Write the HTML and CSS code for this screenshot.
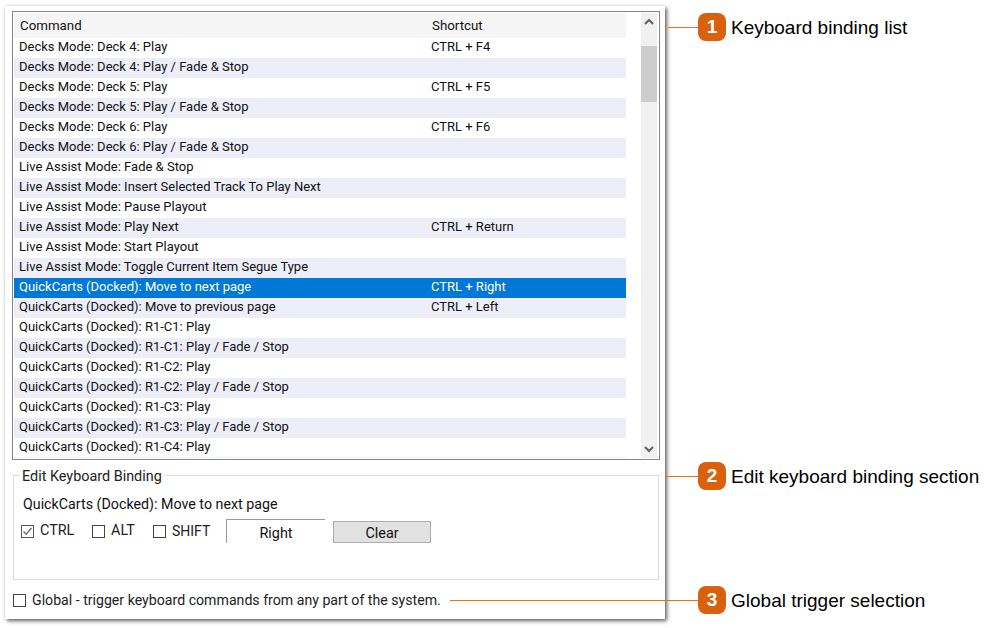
FILE: index.html
```html
<!DOCTYPE html>
<html lang="en">
<head>
<meta charset="utf-8">
<title>Keyboard bindings</title>
<link rel="stylesheet" href="styles.css">
</head>
<body>
<main class="panel">
  <section class="list">
    <div class="table">
      <div class="row head"><span class="cmd">Command</span><span>Shortcut</span></div>
      <div class="row"><span class="cmd">Decks Mode: Deck 4: Play</span><span>CTRL + F4</span></div>
      <div class="row alt"><span class="cmd">Decks Mode: Deck 4: Play / Fade &amp; Stop</span><span></span></div>
      <div class="row"><span class="cmd">Decks Mode: Deck 5: Play</span><span>CTRL + F5</span></div>
      <div class="row alt"><span class="cmd">Decks Mode: Deck 5: Play / Fade &amp; Stop</span><span></span></div>
      <div class="row"><span class="cmd">Decks Mode: Deck 6: Play</span><span>CTRL + F6</span></div>
      <div class="row alt"><span class="cmd">Decks Mode: Deck 6: Play / Fade &amp; Stop</span><span></span></div>
      <div class="row"><span class="cmd">Live Assist Mode: Fade &amp; Stop</span><span></span></div>
      <div class="row alt"><span class="cmd">Live Assist Mode: Insert Selected Track To Play Next</span><span></span></div>
      <div class="row"><span class="cmd">Live Assist Mode: Pause Playout</span><span></span></div>
      <div class="row alt"><span class="cmd">Live Assist Mode: Play Next</span><span>CTRL + Return</span></div>
      <div class="row"><span class="cmd">Live Assist Mode: Start Playout</span><span></span></div>
      <div class="row alt"><span class="cmd">Live Assist Mode: Toggle Current Item Segue Type</span><span></span></div>
      <div class="row selected"><span class="cmd">QuickCarts (Docked): Move to next page</span><span>CTRL + Right</span></div>
      <div class="row alt"><span class="cmd">QuickCarts (Docked): Move to previous page</span><span>CTRL + Left</span></div>
      <div class="row"><span class="cmd">QuickCarts (Docked): R1-C1: Play</span><span></span></div>
      <div class="row alt"><span class="cmd">QuickCarts (Docked): R1-C1: Play / Fade / Stop</span><span></span></div>
      <div class="row"><span class="cmd">QuickCarts (Docked): R1-C2: Play</span><span></span></div>
      <div class="row alt"><span class="cmd">QuickCarts (Docked): R1-C2: Play / Fade / Stop</span><span></span></div>
      <div class="row"><span class="cmd">QuickCarts (Docked): R1-C3: Play</span><span></span></div>
      <div class="row alt"><span class="cmd">QuickCarts (Docked): R1-C3: Play / Fade / Stop</span><span></span></div>
      <div class="row last"><span class="cmd">QuickCarts (Docked): R1-C4: Play</span><span></span></div>
    </div>
    <div class="scrollbar">
      <svg class="arrow" width="16" height="17" viewBox="0 0 16 17"><path d="M4 11 L8 7 L12 11" fill="none" stroke="#606060" stroke-width="2"/></svg>
      <div class="gap-top"></div>
      <div class="thumb"></div>
      <div class="gap-bottom"></div>
      <svg class="arrow" width="16" height="17" viewBox="0 0 16 17"><path d="M4 6 L8 10 L12 6" fill="none" stroke="#606060" stroke-width="2"/></svg>
    </div>
  </section>

  <fieldset class="group">
    <legend>Edit Keyboard Binding</legend>
    <p class="current">QuickCarts (Docked): Move to next page</p>
    <div class="controls">
      <label class="check ctrl"><svg class="box" width="13" height="13" viewBox="0 0 13 13"><rect x=".5" y=".5" width="12" height="12" fill="#fff" stroke="#555"/><path d="M2.5 6.5 L5.2 9.3 L10.5 3" fill="none" stroke="#707070" stroke-width="1.4"/></svg>CTRL</label>
      <label class="check alt-key"><svg class="box" width="13" height="13" viewBox="0 0 13 13"><rect x=".5" y=".5" width="12" height="12" fill="#fff" stroke="#444"/></svg>ALT</label>
      <label class="check shift"><svg class="box" width="13" height="13" viewBox="0 0 13 13"><rect x=".5" y=".5" width="12" height="12" fill="#fff" stroke="#444"/></svg>SHIFT</label>
      <div class="keybox">Right</div>
      <div class="clear">Clear</div>
    </div>
  </fieldset>

  <label class="check global"><svg class="box" width="13" height="13" viewBox="0 0 13 13"><rect x=".5" y=".5" width="12" height="12" fill="#fff" stroke="#444"/></svg>Global - trigger keyboard commands from any part of the system.</label>
</main>

<div class="line line1"></div>
<div class="line line2"></div>
<div class="line line3"></div>

<aside class="callout c1"><span class="badge">1</span><span class="caption">Keyboard binding list</span></aside>
<aside class="callout c2"><span class="badge">2</span><span class="caption">Edit keyboard binding section</span></aside>
<aside class="callout c3"><span class="badge">3</span><span class="caption">Global trigger selection</span></aside>
</body>
</html>
```
FILE: styles.css
```css
* { box-sizing: border-box; }
html, body { margin: 0; padding: 0; background: #fff; }
body {
  width: 995px;
  height: 628px;
  overflow: hidden;
  position: relative;
  font-family: Roboto, "Open Sans", sans-serif;
  font-size: 13px;
  color: #111;
}
.panel {
  width: 660px;
  height: 613px;
  margin: 6px 0 0 5px;
  padding: 5px 5px 0 7px;
  background: #fff;
  box-shadow: 2px 2px 4px rgba(0,0,0,.6), 0 0 3px rgba(0,0,0,.12);
  display: flex;
  flex-direction: column;
}
.list {
  width: 648px;
  height: 449px;
  border: 1px solid #85858a;
  padding: 1px;
  display: flex;
  justify-content: space-between;
  flex: none;
}
.table { width: 612px; }
.row {
  height: 20px;
  display: grid;
  grid-template-columns: 412px 1fr;
  align-items: center;
  white-space: nowrap;
  padding-left: 5px;
  line-height: 17px;
  padding-bottom: 3px;
}
.head { height: 25px; background: #f5f5f5; padding-left: 6px; padding-bottom: 0; font-size: 13.3px; }
.alt { background: #eeeef8; }
.selected { background: #0078d7; color: #fff; }
.last { border-bottom: 1px solid #f0f0f0; }
.scrollbar {
  width: 16px;
  margin-right: 1px;
  background: #f0f0f0;
  display: flex;
  flex-direction: column;
}
.arrow { display: block; flex: none; }
.gap-top { height: 16px; flex: none; }
.thumb { height: 56px; background: #cdcdcd; flex: none; }
.gap-bottom { flex: 1; }
.group {
  width: 646px;
  height: 113px;
  margin: 7px 0 0 1px;
  padding: 0;
  border: 1px solid #dcdcdc;
  min-width: 0;
  flex: none;
  font-size: 14.4px;
}
.group legend {
  padding: 0 2px;
  margin-left: 6px;
  line-height: 20px;
  height: 16px;
  color: #222;
}
.current { margin: 11px 0 0 9px; line-height: 20px; height: 18px; color: #111; font-size: 14.25px; }
.controls {
  margin: 7px 0 0 7px;
  display: flex;
  align-items: flex-start;
}
.check { display: flex; align-items: center; line-height: 18px; color: #222; }
.box { display: block; flex: none; margin-right: 6px; }
.ctrl { width: 71px; margin-top: 3px; }
.alt-key { width: 61px; margin-top: 3px; }
.shift { width: 73px; margin-top: 3px; font-size: 14px; }
.keybox {
  width: 99px;
  height: 24px;
  border-top: 1px solid #9a9a9a;
  border-left: 1px solid #9a9a9a;
  text-align: center;
  line-height: 28px;
}
.clear {
  width: 98px;
  height: 22px;
  margin: 2px 0 0 8px;
  background: #e1e1e1;
  border: 1px solid #adadad;
  text-align: center;
  line-height: 23px;
}
.global { margin: 11px 0 0 1px; font-size: 14.15px; }
.line { position: absolute; height: 1px; background: #e8701a; }
.line1 { left: 668px; top: 27px; width: 30px; background: #d9763a; }
.line2 { left: 666px; top: 476px; width: 32px; }
.line3 { left: 450px; top: 600px; width: 248px; background: #f07010; }
.callout { position: absolute; left: 698px; display: flex; align-items: center; gap: 5px; height: 28px; }
.c1 { top: 13px; }
.c2 { top: 462px; }
.c3 { top: 586px; }
.badge {
  width: 28px;
  height: 28px;
  border-radius: 8px;
  background: #d9600c;
  color: #fff;
  font: bold 19px/28px "Liberation Sans", Arial, sans-serif;
  text-align: center;
}
.caption { font: 19px/28px "Liberation Sans", Arial, sans-serif; color: #000; white-space: nowrap; margin-top: 2px; }
```
